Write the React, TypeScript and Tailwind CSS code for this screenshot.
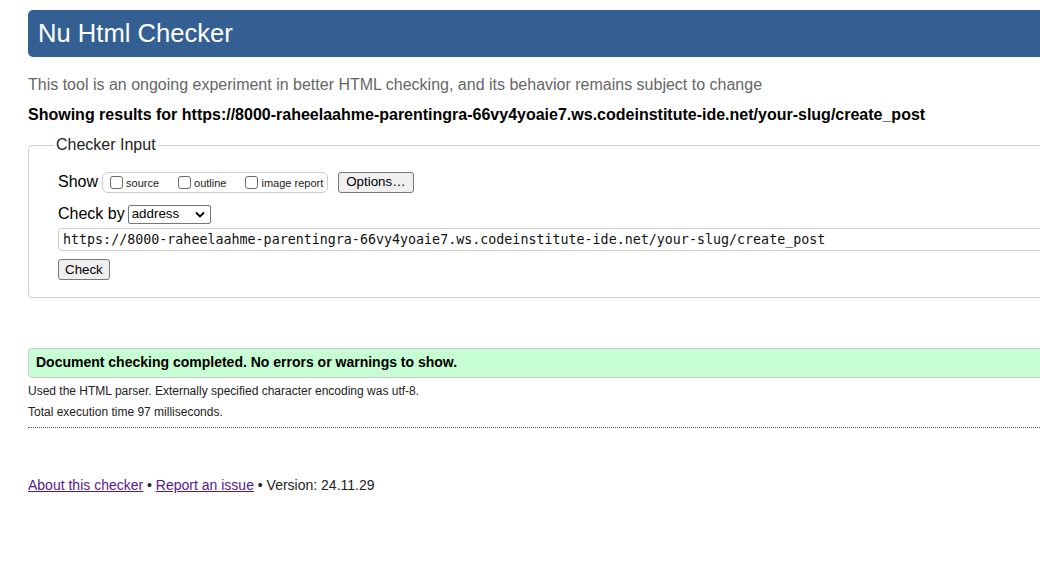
import React from 'react'

const sans = { fontFamily: '"Liberation Sans", Arial, sans-serif' }

const url =
    'https://8000-raheelaahme-parentingra-66vy4yoaie7.ws.codeinstitute-ide.net/your-slug/create_post'

const ShowOption = ({ label }: { label: string }) => (
    <label className="flex items-center text-[11px] leading-none text-[#222]">
        <span className="mr-[3px] inline-block h-[13px] w-[13px] rounded-[3px] border border-[#6b6b6b] bg-white" />
        <span className="mt-[3px]">{label}</span>
    </label>
)

const App = () => {
    return (
        <div className="h-[573px] w-[1040px] overflow-hidden bg-white text-black" style={sans}>
            <div className="ml-[28px] w-[1100px] pt-[10px]">
                <h1 className="flex h-[47px] items-center rounded-[5px] bg-[#335f93] pl-[10px] text-[25.6px] leading-none text-white">
                    Nu Html Checker
                </h1>
                <p className="mt-[18px] text-[16px] leading-[20px] text-[#666]">
                    This tool is an ongoing experiment in better HTML checking, and its behavior remains subject to change
                </p>
                <p className="mt-[10px] text-[16px] font-bold leading-[20px]">Showing results for {url}</p>

                <fieldset className="mt-[10px] rounded-[4px] border border-[#ccc] pb-[16px] pl-[29px] pr-0">
                    <legend className="ml-[-4px] px-[2px] text-[16px] leading-[20px] text-[#222]">Checker Input</legend>
                    <div className="mt-[16px] flex h-[22px] items-center text-[16px] leading-[20px]">
                        <span className="mr-[4px]">Show</span>
                        <div className="flex h-[21px] items-center gap-[19px] rounded-[6px] border border-[#ccc] pl-[7px] pr-[4px]">
                            <ShowOption label="source" />
                            <ShowOption label="outline" />
                            <ShowOption label="image report" />
                        </div>
                        <button className="ml-[10px] h-[21px] rounded-[3px] border border-[#767676] bg-[#efefef] px-[7px] text-[13.33px] leading-none">
                            Options…
                        </button>
                    </div>
                    <div className="mt-[11px] flex h-[20px] items-center text-[16px] leading-[20px]">
                        <span className="mr-[3px]">Check by</span>
                        <div className="flex h-[19px] w-[83px] items-center justify-between rounded-[2px] border border-[#767676] bg-white pl-[3px] pr-[5px] text-[13.33px]">
                            <span>address</span>
                            <svg width="10" height="7" viewBox="0 0 10 7">
                                <path d="M1 1.5 L5 5.5 L9 1.5" fill="none" stroke="#000" strokeWidth="1.8" />
                            </svg>
                        </div>
                    </div>
                    <div
                        className="mt-[4px] flex h-[23px] items-center rounded-[4px] border border-[#ccc] pl-[4px] text-[13.33px] text-[#111]"
                        style={{ fontFamily: '"DejaVu Sans Mono", Menlo, monospace' }}
                    >
                        {url}
                    </div>
                    <button className="mt-[8px] h-[21px] rounded-[3px] border border-[#767676] bg-[#efefef] px-[6px] text-[13.33px] leading-none">
                        Check
                    </button>
                </fieldset>

                <div className="mt-[50px] flex h-[30px] items-center rounded-l-[4px] border border-[#ccc] bg-[#c6fdd2] pl-[7px] text-[14px] font-bold">
                    Document checking completed. No errors or warnings to show.
                </div>
                <p className="mt-[6px] text-[12px] leading-[15px] text-[#222]">
                    Used the HTML parser. Externally specified character encoding was utf-8.
                </p>
                <p className="mt-[6px] text-[12px] leading-[15px] text-[#222]">Total execution time 97 milliseconds.</p>
                <div className="mt-[7px] border-t border-dotted border-[#555]" />

                <p className="mt-[48px] text-[14px] leading-[18px] text-[#222]">
                    <a href="#" className="text-[#551a8b] underline">About this checker</a> •{' '}
                    <a href="#" className="text-[#551a8b] underline">Report an issue</a> • Version: 24.11.29
                </p>
            </div>
        </div>
    )
}

export default App
